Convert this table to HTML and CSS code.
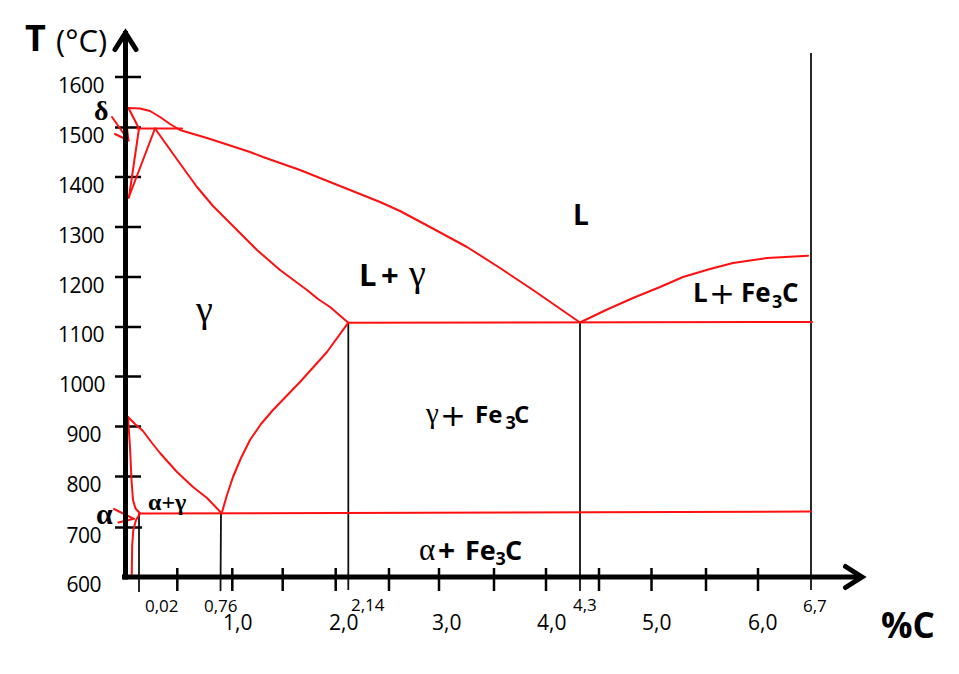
FILE: index.html
```html
<!DOCTYPE html>
<html lang="es">
<head>
<meta charset="utf-8">
<title>Diagrama Fe–C</title>
<link rel="stylesheet" href="styles.css">
</head>
<body>
<main class="page">
<svg class="diagram" viewBox="0 0 959 674" width="959" height="674" xmlns="http://www.w3.org/2000/svg">
  <!-- axis titles -->
  <text class="t-title-b" x="25" y="51">T</text>
  <text class="t-title" x="56" y="52">(°C)</text>
  <text class="t-pct" x="881" y="638">%C</text>

  <!-- y labels -->
  <g class="t-y">
    <text x="104" y="93">1600</text>
    <text x="104" y="143">1500</text>
    <text x="104" y="193">1400</text>
    <text x="104" y="243">1300</text>
    <text x="104" y="293">1200</text>
    <text x="104" y="342">1100</text>
    <text x="105" y="392">1000</text>
    <text x="101" y="442">900</text>
    <text x="101" y="492">800</text>
    <text x="101" y="543">700</text>
    <text x="101" y="592">600</text>
  </g>

  <!-- x labels -->
  <g class="t-xs">
    <text x="145" y="612">0,02</text>
    <text x="204" y="612">0,76</text>
    <text x="351" y="611">2,14</text>
    <text x="573" y="611">4,3</text>
    <text x="803" y="612">6,7</text>
  </g>
  <g class="t-xb">
    <text x="223" y="630">1,0</text>
    <text x="329" y="630">2,0</text>
    <text x="432" y="630">3,0</text>
    <text x="537" y="630">4,0</text>
    <text x="642" y="630">5,0</text>
    <text x="748" y="630">6,0</text>
  </g>

  <!-- black guide verticals -->
  <g class="guide">
    <line x1="139" y1="513" x2="139" y2="592"/>
    <line x1="221" y1="513" x2="220.5" y2="591"/>
    <line x1="348.3" y1="323" x2="348.3" y2="590"/>
    <line x1="580" y1="322" x2="580" y2="591"/>
    <line x1="811" y1="53" x2="811" y2="590"/>
  </g>

  <!-- ticks -->
  <g class="tick">
    <line x1="115" y1="77" x2="141" y2="77"/>
    <line x1="115" y1="127.5" x2="141" y2="127.5"/>
    <line x1="115" y1="177" x2="141" y2="177"/>
    <line x1="115" y1="227" x2="141" y2="227"/>
    <line x1="115" y1="277" x2="141" y2="277"/>
    <line x1="115" y1="327" x2="141" y2="327"/>
    <line x1="115" y1="376.5" x2="141" y2="376.5"/>
    <line x1="115" y1="426.5" x2="141" y2="426.5"/>
    <line x1="115" y1="476.5" x2="141" y2="476.5"/>
    <line x1="115" y1="527.5" x2="142" y2="527.5"/>
    <line x1="177.3" y1="568" x2="177.3" y2="591"/>
    <line x1="232.3" y1="568" x2="232.3" y2="591"/>
    <line x1="282.7" y1="568" x2="282.7" y2="591"/>
    <line x1="335.7" y1="568" x2="335.7" y2="591"/>
    <line x1="389" y1="568" x2="389" y2="591"/>
    <line x1="439" y1="568" x2="439" y2="591"/>
    <line x1="494" y1="568" x2="494" y2="591"/>
    <line x1="546" y1="568" x2="546" y2="591"/>
    <line x1="599" y1="568" x2="599" y2="591"/>
    <line x1="651.5" y1="568" x2="651.5" y2="591"/>
    <line x1="706" y1="568" x2="706" y2="591"/>
    <line x1="758" y1="568" x2="758" y2="591"/>
  </g>

  <!-- phase boundaries -->
  <g class="phase">
    <polyline points="128,108 140,108.5 150,111 160,117 170,124 180,130 190,133 207,138 250,152 263,157 300,170 330,182 380,202 400,211 430,227 467,247 500,268 533,290 580,322.5"/>
    <polyline points="580,322.5 606,310 633,298 660,287 683,277 710,269 733,263 767,258 808,255.7"/>
    <line x1="137" y1="128.5" x2="182" y2="128.5"/>
    <polyline points="128.5,108 139,128.5 129,197"/>
    <line x1="155" y1="128.5" x2="128.5" y2="198"/>
    <polyline points="155,128.5 176,158 197,187 213,206 230,223 257,250 280,270 307,290 318,299 330,307 348.3,322.7"/>
    <line x1="348.3" y1="322.7" x2="812" y2="322"/>
    <polyline points="128,417 135,424 143,431 152,443 160,453 168,462 177,472 193,487 207,498 221.7,513.3"/>
    <polyline points="221.7,513.3 227,495 233,477 241,458 250,440 261,424 273,410 300,382 327,352 348.3,322.7"/>
    <polyline points="128,417 130,447 131.5,480 133,500 135.5,508.5 140,513.3"/>
    <polyline points="140,513.5 136,520 133.3,530 132.2,545 131.7,577"/>
    <line x1="139" y1="513.5" x2="811" y2="511.5"/>
    <!-- delta arrow -->
    <polyline points="112,117 128.5,140.5"/>
    <polyline points="115,134 128.5,140.5 127,128.5"/>
    <!-- alpha arrow -->
    <polyline points="114,509 134,518.8 118.5,522.5"/>
  </g>

  <!-- main axes -->
  <g class="axis">
    <line x1="125.5" y1="31" x2="125.5" y2="579.5"/>
    <line x1="122" y1="577" x2="862" y2="577"/>
    <polyline class="arrow" points="115,49.5 125.5,33 136,49.5"/>
    <polyline class="arrow" points="845.5,566.5 862,577 845.5,587.5"/>
  </g>

  <!-- phase labels -->
  <text class="t-greek t-delta" x="94" y="120">δ</text>
  <text class="t-greek t-alpha" x="96" y="524">α</text>
  <text class="t-greek t-ag" x="148" y="510">α+γ</text>
  <text class="t-greek t-gamma" x="196" y="322">γ</text>

  <text class="t-bold t-l" x="573" y="225">L</text>

  <text class="t-bold t-lg" x="359" y="286">L</text>
  <text class="t-bold t-lg" x="381" y="286">+</text>
  <text class="t-greek t-gamma2" x="409" y="286">γ</text>

  <text class="t-bold t-lfe" x="693" y="302">L</text>
  <text class="t-plus" x="709" y="304">+</text>
  <text class="t-bold t-lfe" x="741" y="302">Fe</text>
  <text class="t-bold t-sub" x="772" y="308">3</text>
  <text class="t-bold t-lfe" x="782" y="302">C</text>

  <text class="t-greek t-gamma3" x="426" y="423">γ</text>
  <text class="t-plus" x="440" y="426">+</text>
  <text class="t-bold t-gfe" x="475" y="423">Fe</text>
  <text class="t-bold t-sub" x="505.5" y="429">3</text>
  <text class="t-bold t-gfe" x="514" y="423">C</text>

  <text class="t-greek t-alpha2" x="419" y="560">α</text>
  <text class="t-bold t-aplus" x="438" y="561">+</text>
  <text class="t-bold t-afe" x="465" y="560">Fe</text>
  <text class="t-bold t-sub" x="495.5" y="565">3</text>
  <text class="t-bold t-afe" x="505" y="560">C</text>
</svg>
</main>
</body>
</html>
```

FILE: styles.css
```css
html, body {
  margin: 0;
  padding: 0;
  background: #ffffff;
}

.page {
  width: 959px;
  height: 674px;
  overflow: hidden;
}

.diagram {
  display: block;
}

.axis {
  stroke: #000000;
  stroke-width: 5;
  fill: none;
}

.axis .arrow {
  stroke-linecap: round;
  stroke-linejoin: miter;
}

.tick {
  stroke: #000000;
  stroke-width: 2.5;
}

.guide {
  stroke: #111111;
  stroke-width: 1.8;
}

.phase {
  stroke: #ff1010;
  stroke-width: 2;
  fill: none;
  stroke-linejoin: round;
  stroke-linecap: round;
}

text {
  fill: #000000;
  font-family: "Open Sans", "Noto Sans", sans-serif;
}

.t-title-b {
  font-weight: 700;
  font-size: 36px;
}

.t-title {
  font-weight: 400;
  font-size: 31px;
}

.t-pct {
  font-weight: 700;
  font-size: 35px;
}

.t-y text {
  font-size: 21px;
  letter-spacing: -0.5px;
  text-anchor: end;
}

.t-xs text {
  font-size: 17px;
}

.t-xb text {
  font-size: 21px;
}

.t-greek {
  font-family: "Liberation Serif", "DejaVu Serif", serif;
}

.t-delta {
  font-size: 28px;
  font-weight: 700;
}

.t-alpha {
  font-size: 30px;
  font-weight: 700;
}

.t-ag {
  font-size: 24px;
  font-weight: 700;
}

.t-gamma {
  font-size: 38px;
}

.t-gamma2 {
  font-size: 38px;
}

.t-gamma3 {
  font-size: 29px;
}

.t-alpha2 {
  font-size: 31px;
}

.t-bold {
  font-weight: 700;
}

.t-l {
  font-size: 28px;
}

.t-lg {
  font-size: 31px;
}

.t-lfe {
  font-size: 26px;
}

.t-gfe {
  font-size: 24px;
}

.t-afe {
  font-size: 27px;
}

.t-sub {
  font-size: 18px;
}

.t-plus {
  font-family: "DejaVu Sans", sans-serif;
  font-size: 31px;
  font-weight: 400;
}

.t-aplus {
  font-size: 30px;
}
```
